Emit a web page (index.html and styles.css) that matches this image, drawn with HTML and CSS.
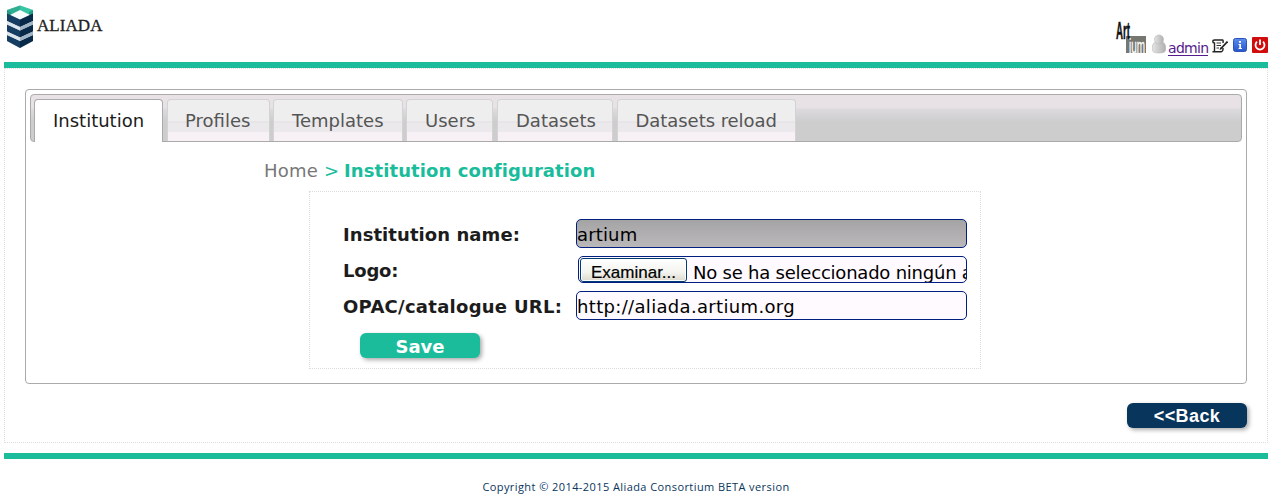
FILE: index.html
```html
<!DOCTYPE html>
<html lang="en">
<head>
<meta charset="utf-8">
<title>ALIADA</title>
<link rel="stylesheet" href="styles.css">
</head>
<body>
<header class="header">
  <div class="brand">
    <svg class="brand-mark" viewBox="0 0 28 44" width="28" height="44">
      <path d="M1 5 14 .5 27 5V36L14 43 1 36Z" fill="#c5d2dc"/>
      <path d="M1 5 14 .5V6L5 10.500 1 10Z" fill="#2fae91"/>
      <path d="M27 5 14 .5V6L23 10.500 27 10Z" fill="#38c5a4"/>
      <path d="M1 5 5 7V11L1 10Z M27 5 23 7V11L27 10Z" fill="#249b83"/>
      <path d="M14 5 24 10 14 15 4 10Z" fill="#f5fcfb"/>
      <path d="M1 8.500 14 14.500V22L1 16Z M1 19.500 14 25.500V32.500L1 26.500Z M1 30 14 36V43L1 36Z" fill="#163e62"/>
      <path d="M27 8.500 14 14.500V22L27 16Z M27 19.500 14 25.500V32.500L27 26.500Z M27 30 14 36V43L27 36Z" fill="#082947"/>
      <path d="M1 16 14 22V25.500L1 19.500Z M1 26.500 14 32.500V36L1 30Z" fill="#dce5eb"/>
      <path d="M27 16 14 22V25.500L27 19.500Z M27 26.500 14 32.500V36L27 30Z" fill="#9fb4c4"/>
    </svg>
    <span class="brand-name">ALIADA</span>
  </div>
  <div class="tools">
    <svg class="artium" viewBox="0 0 32 32" width="32" height="32">
      <rect x="10" y="14" width="20" height="17" fill="#777772"/>
      <text class="art" x="0" y="17" textLength="14" lengthAdjust="spacingAndGlyphs">Art</text>
      <text class="ium" x="13" y="31" textLength="16" lengthAdjust="spacingAndGlyphs">ium</text>
    </svg>
    <svg class="person" viewBox="0 0 14 20" width="14" height="20">
      <defs><linearGradient id="grey"><stop stop-color="#e4e4e4"/><stop offset="1" stop-color="#b0b0b0"/></linearGradient></defs>
      <path d="M3.200 8C-.2 10 .2 14 .5 16.500Q1 19 7 19T13.500 16.500C13.800 14 14.200 10 10.800 8Z" fill="url(#grey)" stroke="#b5b5b5" stroke-width=".6"/>
      <circle cx="7" cy="5.500" r="4.500" fill="url(#grey)" stroke="#b5b5b5" stroke-width=".6"/>
    </svg>
    <a class="user" href="#">admin</a>
    <svg class="edit" viewBox="0 0 16 14" width="16" height="14">
      <path d="M10.500 1H2.500Q.8 1 .8 2.500T2.500 4V11.500Q2.500 13 .5 12.800H9.500Q11 12.500 11 10V9M10.500 1Q11.500 1 11 4" fill="none" stroke="#222" stroke-width="1.400"/>
      <path d="M4.500 4H9M4.500 6.500H9M4.500 9H7" stroke="#333"/>
      <path d="M15.500 2.500 9 9.500" stroke="#222" stroke-width="1.800"/>
      <path d="M7.500 11 8.300 8.300 10 10Z" fill="#222"/>
    </svg>
    <svg class="info" viewBox="0 0 14 14" width="14" height="14">
      <defs><linearGradient id="blue" x2="0" y2="1"><stop stop-color="#5a8cf0"/><stop offset="1" stop-color="#2656cc"/></linearGradient></defs>
      <rect x=".5" y=".5" width="13" height="13" rx="2" fill="url(#blue)" stroke="#2c54b8"/>
      <path d="M6 3H8V4.700H6ZM5.500 6H8V10H9V11H5.500V10H6.300V7H5.500Z" fill="#fff"/>
    </svg>
    <svg class="power" viewBox="0 0 16 16" width="16" height="16">
      <rect width="16" height="16" rx="1" fill="#d00c0c"/>
      <path d="M5 4.700A4.500 4.500 0 1 0 11 4.700M8 2.500V8" fill="none" stroke="#fff" stroke-width="1.800"/>
    </svg>
  </div>
</header>
<main class="main">
  <section class="panel">
    <nav class="tabs">
      <a class="tab tab-active"><span>Institution</span></a>
      <a class="tab tab-profiles"><span>Profiles</span></a>
      <a class="tab tab-templates"><span>Templates</span></a>
      <a class="tab tab-users"><span>Users</span></a>
      <a class="tab tab-datasets"><span>Datasets</span></a>
      <a class="tab tab-reload"><span>Datasets reload</span></a>
    </nav>
    <div class="crumbs"><span class="home">Home</span><span class="sep">&gt;</span><span class="current">Institution configuration</span></div>
    <form class="form">
      <div class="row row-name"><label class="label label-name">Institution name:</label><div class="field field-name">artium</div></div>
      <div class="row row-logo"><label class="label label-logo">Logo:</label><div class="field field-file"><span class="browse">Examinar...</span><span class="filename">No se ha seleccionado ningún archivo.</span></div></div>
      <div class="row row-url"><label class="label label-url">OPAC/catalogue URL:</label><div class="field field-url">http://aliada.artium.org</div></div>
      <button class="button save" type="button">Save</button>
    </form>
  </section>
  <button class="button back" type="button">&lt;&lt;Back</button>
</main>
<footer class="footer"><span class="copyright">Copyright © 2014-2015 Aliada Consortium BETA version</span></footer>
</body>
</html>
```
FILE: styles.css
```css
* { box-sizing: border-box; }
body { margin: 0; padding: 0 4px; background: #fff; font: 18px/22px "DejaVu Sans", sans-serif; color: #1c1c1c; overflow: hidden; }
svg { display: block; flex: none; }
.header { height: 68px; border-bottom: 6px solid #1abc9c; display: flex; justify-content: space-between; }
.brand { display: flex; padding: 5px 0 0 2px; }
.brand-name { font: 17px/20px "Liberation Serif", serif; margin: 11px 0 0 3px; color: #222; -webkit-text-stroke: .3px #222; letter-spacing: .05px; }
.tools { display: flex; align-items: flex-start; white-space: nowrap; }
.artium { margin: 22px 4px 0 0; overflow: visible; }
.art { font: bold 23px "Liberation Sans", sans-serif; fill: #111; stroke: #111; stroke-width: .5px; }
.ium { font: 21px "Liberation Sans", sans-serif; fill: #fff; stroke: #fff; stroke-width: .3px; }
.person { margin: 34px 2px 0 0; }
.user { margin-top: 40px; width: 40px; height: 16px; font: 14px/16px "DejaVu Sans", sans-serif; letter-spacing: -.7px; color: #551a8b; text-decoration: none; border-bottom: 1px solid #551a8b; }
.edit { margin: 39px 5px 0 4px; }
.info { margin: 38px 5px 0 0; }
.power { margin-top: 37px; }
.main { height: 375px; border: 1px dotted #ddd; padding: 20px; display: flex; flex-direction: column; }
.panel { height: 295px; flex: none; border: 1px solid #aaa; border-radius: 4px; padding: 4px; }
.tabs { height: 48px; border: 1px solid #aaa; border-radius: 4px; padding: 4px 3px 0; display: flex; gap: 3px; background: linear-gradient(#e8e2e6 0, #e8e2e6 28%, #dedbde 30%, #d1d0d2 50%, #cdcdcd 60%); }
.tab { height: 42px; border: 1px solid #d3d3d3; border-bottom: 0; border-radius: 4px 4px 0 0; color: #555; padding: 10px 0 0 18px; background: linear-gradient(#eee 0 50%, #e7e5e7 50% 57%, #ece9ec 57% 78%, #f7f1f6 78%); white-space: nowrap; }
.tab-active { width: 129px; height: 43px; background: #fff; border-color: #aaa; color: #1c1c1c; }
.tab-profiles { width: 103px; margin-left: 1px; padding-left: 17px; }
.tab-templates { width: 130px; }
.tab-users { width: 87px; }
.tab-datasets { width: 116px; margin-left: 1px; }
.tab-reload { width: 179px; margin-left: 1px; padding-left: 17.500px; letter-spacing: -.05px; }
.crumbs { display: flex; margin: 18px 0 0 234px; white-space: nowrap; }
.home { width: 60px; color: #777; letter-spacing: .2px; }
.sep { width: 20px; color: #1abc9c; }
.current { font-weight: bold; color: #1abc9c; letter-spacing: .09px; }
.form { width: 672px; height: 178px; border: 1px dotted #ddd; margin: 9px 0 0 279px; padding: 27px 13px 0 33px; }
.row { display: flex; }
.row-name { height: 37px; }
.row-logo { height: 35px; }
.row-url { height: 42px; }
.label { width: 233px; padding-top: 5px; font-weight: bold; white-space: nowrap; flex: none; }
.label-name { letter-spacing: .07px; }
.label-logo { padding-top: 4px; letter-spacing: -.2px; }
.label-url { letter-spacing: .27px; }
.field { height: 29px; width: 391px; border: 1px solid #001f7e; border-radius: 5px; background: #fffaff; color: #000; padding: 4px 0 0; white-space: nowrap; overflow: hidden; }
.field-name { background: linear-gradient(#a5a4a5, #bbb8ba); letter-spacing: .15px; }
.field-url { letter-spacing: .33px; }
.field-file { margin-left: 2px; width: 389px; height: 27px; padding: 1px; display: flex; }
.browse { width: 107px; height: 24px; flex: none; border: 1px solid #003c74; border-radius: 3px; background: linear-gradient(#fff, #f3f3ef 60%, #ddd9ce); padding: 4px 0 0 10px; font: 17px/20px "Liberation Sans", sans-serif; box-shadow: inset 0 0 0 1px #fff; -webkit-text-stroke: .2px #000; }
.filename { padding: 4px 0 0 6px; letter-spacing: -.22px; }
.button { display: block; width: 120px; height: 25px; border: 0; border-radius: 6px; padding: 0; color: #fff; font: bold 18px/27px "DejaVu Sans", sans-serif; box-shadow: 2px 2px 4px #aaa; }
.save { background: #1abc9c; margin-left: 17px; }
.back { background: #08355c; align-self: flex-end; margin-top: 19px; flex: none; font: bold 18px/27px "Liberation Sans", sans-serif; letter-spacing: .4px; }
.footer { height: 55px; margin-top: 10px; border-top: 6px solid #1abc9c; text-align: center; padding-top: 20px; font: 11px/16px "Open Sans", sans-serif; color: #08355c; }
.copyright { letter-spacing: .42px; }
```
